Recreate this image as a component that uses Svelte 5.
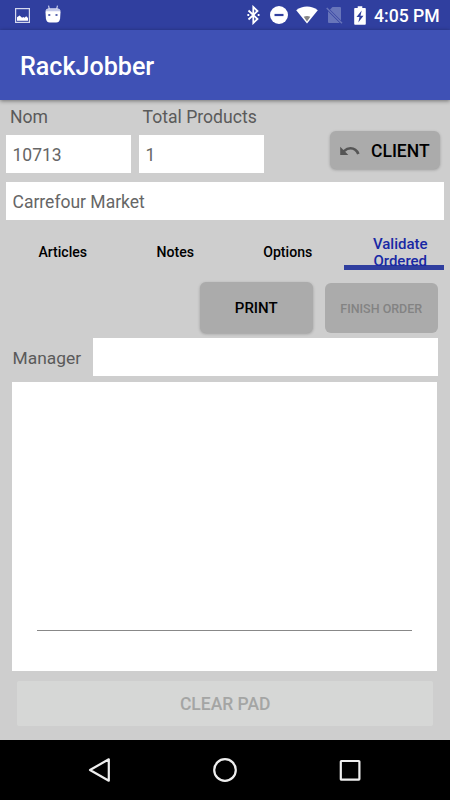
<script>
  let nom = "10713";
  let total = "1";
  let client = "Carrefour Market";
  let manager = "";
  let tabs = ["Articles", "Notes", "Options", "Validate Ordered"];
  let selected = 3;
</script>

<div class="screen">
  <div class="status">
    <svg class="picture" width="15" height="15" viewBox="0 0 15 15">
      <rect x=".6" y=".6" width="13.8" height="13.8" fill="none" stroke="#d5d9ee" stroke-width="1.2" />
      <path d="M2 12.8V9.2L4.6 7.5l2.5 2.2 1.2-.8 1.2.8 1.700-1.400 1.800 1.600v2.900z" fill="#fff" />
    </svg>
    <svg class="robot" width="16" height="18" viewBox="0 0 16 18">
      <path d="M4.6 5L3.5.7M11.4 5L12.5.7" stroke="#c5cae9" stroke-width="1.2" />
      <path d="M.5 7.200Q.5 3.500 4 3.500h8q3.500 0 3.500 3.700l-.4 6q-.3 4.200-4 4.200H4.900q-3.700 0-4-4.200z" fill="#fff" />
      <path d="M.7 6.300Q1 3.500 4 3.500h8q3 0 3.300 2.800z" fill="#c5cae9" />
      <path d="M3.300 9h2v2h-2zM10.500 9h2v2h-2z" fill="#5b67af" />
    </svg>
    <span class="space"></span>
    <svg class="bt" width="13" height="20" viewBox="0 0 13 20">
      <path d="M1.500 5.500L10.500 14 6.300 18V2l4.200 4-9 8.500" fill="none" stroke="#fff" stroke-width="1.800" />
      <path d="M.4 9h1.800v1.900H.4zM10.700 9h1.800v1.900h-1.800z" fill="#fff" />
    </svg>
    <svg class="dnd" width="18" height="18" viewBox="0 0 18 18">
      <circle cx="9" cy="9" r="9" fill="#fff" />
      <path d="M4.500 9h9" stroke="#303f9f" stroke-width="2.200" />
    </svg>
    <svg class="wifi" width="22" height="18" viewBox="0 0 22 18">
      <path d="M11 17.500L.2 4.200Q5 .6 11 .6t10.800 3.600z" fill="#fff" />
      <path d="M11 15.500L7.700 10.800Q11 9 14.300 10.800z" fill="#858585" />
    </svg>
    <svg class="sim" width="17" height="18" viewBox="0 0 17 18">
      <path d="M6.500 1H14q1 0 1 1v12.500L4 3.500zM2 5.200L13.800 17H3q-1 0-1-1z" fill="#6875ba" />
      <path d="M.7 2L16 17.300" stroke="#6875ba" stroke-width="1.500" />
    </svg>
    <svg class="battery" width="12" height="19" viewBox="0 0 12 19">
      <path d="M1 2h2.700V.3h4.600V2H11q.8 0 .8.800v15q0 .9-.8.900H1q-.8 0-.8-.9v-15Q.2 2 1 2z" fill="#fff" />
      <path d="M7.700 4.500L2.500 11h3l-1.200 5.500L9.500 9.700h-3z" fill="#303f9f" />
    </svg>
    <span class="time">4:05 PM</span>
  </div>

  <div class="appbar">RackJobber</div>

  <div class="content">
    <div class="labels">
      <span class="nomLabel">Nom</span>
      <span>Total Products</span>
    </div>
    <div class="numbers">
      <input type="text" class="short" bind:value={nom} />
      <input type="text" class="short" bind:value={total} />
      <button type="button" class="btn client">
        <svg width="20" height="10" viewBox="0 0 20 10">
          <path d="M.2.8L3.400 4Q6.500 1.100 10.500 1.100 17 1.100 19.600 7.600l-2.500.9Q15 3.400 10.500 3.400 7.600 3.400 5.200 5.700L8.300 8.900H.2z" fill="#555" />
        </svg>
        <span>CLIENT</span>
      </button>
    </div>
    <input type="text" class="name" bind:value={client} />

    <div class="tabs">
      {#each tabs as tab, i}
        <button type="button" class="tab" class:active={i === selected} on:click={() => (selected = i)}>
          <span>{tab}</span>
        </button>
      {/each}
    </div>

    <div class="actions">
      <button type="button" class="btn print">PRINT</button>
      <button type="button" class="btn finish" disabled>FINISH ORDER</button>
    </div>

    <div class="manager">
      <span>Manager</span>
      <input type="text" bind:value={manager} />
    </div>

    <div class="pad">
      <div class="line"></div>
    </div>
    <button type="button" class="clear" disabled>CLEAR PAD</button>
  </div>

  <div class="nav">
    <svg width="24" height="26" viewBox="0 0 24 26">
      <path d="M20.800 2.300v21.400L2 13z" fill="none" stroke="#eee" stroke-width="2.200" stroke-linejoin="round" />
    </svg>
    <svg width="24" height="26" viewBox="0 0 24 26">
      <circle cx="12" cy="13" r="10.800" fill="none" stroke="#eee" stroke-width="2.200" />
    </svg>
    <svg width="24" height="26" viewBox="0 0 24 26">
      <rect x="2.800" y="4" width="18.600" height="18.600" rx=".6" fill="none" stroke="#eee" stroke-width="2.200" />
    </svg>
  </div>
</div>

<style>
  :global(body) {
    margin: 0;
  }

  .screen {
    width: 450px;
    height: 800px;
    display: flex;
    flex-direction: column;
    background: #cecece;
    font-family: Roboto, "Liberation Sans", sans-serif;
    color: #5a5a5a;
    overflow: hidden;
  }

  .screen * {
    box-sizing: border-box;
  }

  svg {
    display: block;
    flex: none;
  }

  button, input {
    font-family: inherit;
    border: 0;
    margin: 0;
  }

  .status {
    height: 30px;
    flex: none;
    display: flex;
    align-items: center;
    padding: 0 11px 0 15px;
    background: #303f9f;
  }

  .robot {
    margin: 0 0 2px 15px;
  }

  .space {
    flex: 1;
  }

  .dnd {
    margin-left: 10px;
  }

  .wifi {
    margin-left: 8px;
  }

  .sim {
    margin-left: 8px;
  }

  .battery {
    margin-left: 11px;
  }

  .time {
    width: 65px;
    margin: 1px 0 0 8px;
    font-size: 17.6px;
    font-weight: 500;
    white-space: nowrap;
    color: #fff;
  }

  .appbar {
    height: 70px;
    flex: none;
    padding: 2px 0 0 20px;
    line-height: 70px;
    background: #3f51b5;
    color: #fff;
    font-size: 25.1px;
    font-weight: 500;
    box-shadow: 0 1px 4px rgba(0, 0, 0, 0.45);
    z-index: 1;
  }

  .content {
    height: 640px;
    flex: none;
    display: flex;
    flex-direction: column;
  }

  .labels {
    display: flex;
    height: 35px;
    padding: 7px 0 0 10px;
    font-size: 17.6px;
    line-height: 21px;
  }

  .nomLabel {
    width: 132.5px;
  }

  input {
    height: 37.5px;
    padding: 3px 6.5px 0;
    background: #fff;
    border-radius: 0;
    color: #666;
    font-size: 17.5px;
    outline: 0;
  }

  .numbers {
    display: flex;
    height: 47px;
    padding: 0 10px 0 6px;
  }

  .short {
    width: 125px;
    margin-right: 8px;
  }

  .btn {
    display: flex;
    align-items: center;
    justify-content: center;
    padding: 0;
    border-radius: 6px;
    background: #ababab;
    color: #000;
    font-weight: 500;
    box-shadow: 0 1px 3px rgba(0, 0, 0, 0.25);
  }

  .client {
    width: 110px;
    height: 38px;
    margin: -4px 0 0 auto;
    justify-content: flex-start;
    padding: 2px 0 0 10px;
    gap: 11px;
    font-size: 17.5px;
  }

  .name {
    width: 438px;
    margin: 0 6px;
  }

  .tabs {
    display: grid;
    grid-template-columns: repeat(4, 1fr);
    height: 50px;
    margin-top: 12.5px;
    padding-bottom: 12px;
  }

  /* labels sit slightly right of the tab's middle */
  .tab {
    display: flex;
    align-items: center;
    justify-content: center;
    height: 38px;
    margin: 0 6px;
    padding: 3px 6px 0 19px;
    background: none;
    color: #000;
    font-size: 14.1px;
    font-weight: 500;
    line-height: 17px;
  }

  .active {
    color: #1828a5;
    font-size: 15px;
    background: linear-gradient(#303f9f, #303f9f) bottom / 100% 5px no-repeat;
  }

  .actions {
    display: flex;
    justify-content: flex-end;
    gap: 12.5px;
    height: 56px;
    padding-right: 12.5px;
  }

  .print {
    width: 112.5px;
    height: 51px;
    font-size: 15px;
  }

  .finish {
    width: 112.5px;
    height: 50px;
    margin-top: 1px;
    padding-top: 1px;
    color: #838383;
    font-size: 12.5px;
    box-shadow: none;
  }

  .manager {
    display: flex;
    align-items: center;
    height: 37.5px;
    padding: 0 12.5px;
    font-size: 17.4px;
  }

  .manager span {
    width: 80.5px;
    padding-top: 3px;
  }

  .manager input {
    flex: 1;
    min-width: 0;
  }

  .pad {
    height: 289px;
    margin: 6px 12.6px 0 12.4px;
    padding: 248px 25px 0;
    background: #fff;
  }

  .line {
    height: 1px;
    background: #888;
  }

  .clear {
    height: 45px;
    margin: 10px 17px 0 17.4px;
    padding: 2px 0 0;
    border-radius: 2px;
    background: #d6d7d6;
    color: #a4a5a4;
    font-size: 17.5px;
    font-weight: 500;
  }

  .nav {
    height: 60px;
    flex: none;
    display: flex;
    align-items: center;
    justify-content: center;
    gap: 101px;
    background: #000;
  }
</style>
